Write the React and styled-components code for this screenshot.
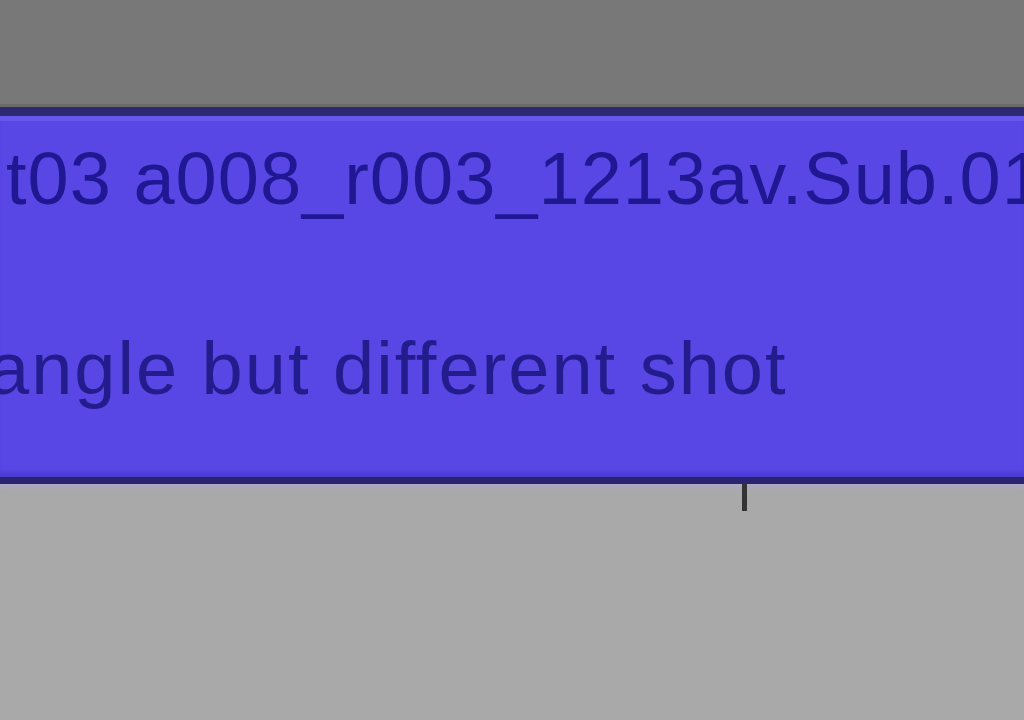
import React from "react";
import styled, { createGlobalStyle } from "styled-components";

const Global = createGlobalStyle`
  html, body {
    margin: 0;
    padding: 0;
    height: 100%;
    background: #a9a9a9;
    overflow: hidden;
  }
  #root {
    height: 100%;
  }
`;

const Timeline = styled.div`
  display: flex;
  flex-direction: column;
  width: 1024px;
  height: 720px;
  overflow: hidden;
`;

const Track = styled.div`
  flex: ${(p) => (p.grow ? 1 : "none")};
  height: ${(p) => (p.grow ? "auto" : `${p.h}px`)};
  background: ${(p) => p.bg};
  box-shadow: ${(p) => p.shade || "none"};
`;

const Clip = styled.div`
  height: 335px;
  background: #5847e5;
  border-top: 9px solid #2e2970;
  border-bottom: 7px solid #2a2371;
  box-shadow: inset 0 5px 0 #6558ea, inset 0 -6px 4px -2px #4a3cc8;
  padding-top: 26px;
  box-sizing: content-box;
  display: flex;
  flex-direction: column;
  gap: 116px;
  overflow: hidden;
  font-family: "Liberation Sans", Arial, sans-serif;
  font-size: 74px;
  line-height: 74px;
  white-space: nowrap;
`;

const ClipLine = styled.div`
  color: ${(p) => p.color};
  margin-left: ${(p) => p.indent}px;
  letter-spacing: ${(p) => p.spacing}px;
`;

const Marker = styled.div`
  width: 5px;
  height: 27px;
  margin-left: 742px;
  background: #333;
`;

export default function App() {
  return (
    <>
      <Global />
      <Timeline>
        <Track h={107} bg="#787878" shade="inset 0 -3px 0 #6a6a70" />
        <Clip>
          <ClipLine color="#1f1892" indent={6} spacing={1}>
            t03 a008_r003_1213av.Sub.01
          </ClipLine>
          <ClipLine color="#231c8c" indent={-12} spacing={2}>
            angle but different shot
          </ClipLine>
        </Clip>
        <Track grow bg="#a9a9a9" shade="inset 0 6px 4px -2px #aea7c8">
          <Marker />
        </Track>
      </Timeline>
    </>
  );
}
